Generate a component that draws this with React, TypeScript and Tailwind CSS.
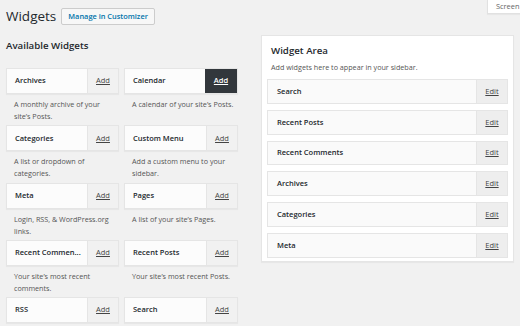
import React from "react";

const widgets = [
  { name: "Archives", desc: "A monthly archive of your site\u2019s Posts." },
  { name: "Calendar", desc: "A calendar of your site\u2019s Posts.", active: true },
  { name: "Categories", desc: "A list or dropdown of categories." },
  { name: "Custom Menu", desc: "Add a custom menu to your sidebar." },
  { name: "Meta", desc: "Login, RSS, & WordPress.org links." },
  { name: "Pages", desc: "A list of your site\u2019s Pages." },
  { name: "Recent Commen...", desc: "Your site\u2019s most recent comments." },
  { name: "Recent Posts", desc: "Your site\u2019s most recent Posts." },
  { name: "RSS", desc: "" },
  { name: "Search", desc: "" },
];

const sidebar = ["Search", "Recent Posts", "Recent Comments", "Archives", "Categories", "Meta"];

function WidgetItem({ name, desc, active }: { name: string; desc: string; active?: boolean }) {
  return (
    <div>
      <div className="flex h-[26px] border border-[#e5e5e5] bg-[#fcfcfc] shadow-[0_1px_1px_rgba(0,0,0,0.04)]">
        <div className="flex flex-1 items-center pl-[8px] text-[7.5px] font-semibold text-[#23282d]">
          {name}
        </div>
        <div
          className={
            active
              ? "flex w-[32px] items-center justify-center bg-[#32373c] text-[7.5px] font-semibold text-white underline"
              : "flex w-[31px] items-center justify-center border-l border-[#e5e5e5] bg-[#f1f1f1] text-[7.5px] font-medium text-[#444] underline"
          }
        >
          Add
        </div>
      </div>
      <p className="pl-[8px] pr-[4px] pt-[4px] pb-[3.25px] text-[7.2px] leading-[12px] text-[#555]">{desc}</p>
    </div>
  );
}

export default function App() {
  return (
    <div className="relative h-[326px] w-[520px] overflow-hidden bg-[#f1f1f1] font-['Open_Sans',sans-serif]">
      <div className="absolute left-[487px] top-0 h-[14px] w-[80px] whitespace-nowrap border border-t-0 border-[#e1e1e1] bg-white pl-[8px] text-[7.4px] leading-[12px] text-[#666] shadow-[0_1px_1px_rgba(0,0,0,0.04)]">
        Screen Options
      </div>

      <div className="flex items-center gap-[5px] pl-[6px] pt-[7px]">
        <h1 className="text-[13.5px] leading-[19px] text-[#23282d]">Widgets</h1>
        <span className="rounded-[2px] border border-[#ccc] bg-[#f7f7f7] px-[6px] text-[7.4px] font-semibold leading-[15px] text-[#0073aa]">
          Manage in Customizer
        </span>
      </div>

      <div className="mt-[9px] flex items-start">
        <div className="ml-[6px] w-[232px]">
          <h2 className="mt-[4px] text-[9.7px] font-semibold leading-[14px] text-[#23282d]">Available Widgets</h2>
          <div className="mt-[15px] grid grid-cols-[113px_114px] gap-x-[5px]">
            {widgets.map((w) => (
              <WidgetItem key={w.name} name={w.name} desc={w.desc} active={w.active} />
            ))}
          </div>
        </div>

        <div className="ml-[23px] w-[253px] border border-[#e5e5e5] bg-white px-[5px] pb-[3px] shadow-[0_1px_1px_rgba(0,0,0,0.04)]">
          <h3 className="ml-[4px] mt-[9px] text-[9.7px] font-semibold leading-[12px] text-[#23282d]">Widget Area</h3>
          <p className="ml-[4px] mt-[4px] text-[7.2px] leading-[12px] text-[#555]">
            Add widgets here to appear in your sidebar.
          </p>
          <div className="mt-[6px] flex flex-col gap-[6px]">
            {sidebar.map((s) => (
              <div key={s} className="flex h-[24.8px] border border-[#e5e5e5] bg-[#fafafa]">
                <div className="flex flex-1 items-center pl-[9px] text-[7.5px] font-semibold text-[#23282d]">{s}</div>
                <div className="flex w-[31px] items-center justify-center border-l border-[#e5e5e5] bg-[#eeeeee] text-[7.5px] font-medium text-[#444] underline">
                  Edit
                </div>
              </div>
            ))}
          </div>
        </div>
      </div>
    </div>
  );
}
